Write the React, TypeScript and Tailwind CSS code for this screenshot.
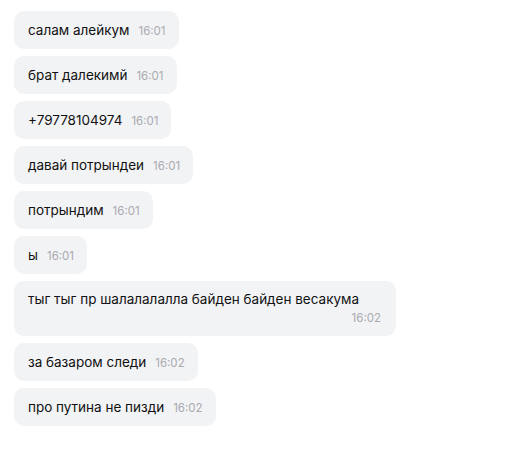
import React from "react";

const msgs: { t: string; time: string; wide?: boolean }[] = [
  { t: "салам алейкум", time: "16:01" },
  { t: "брат далекимй", time: "16:01" },
  { t: "+79778104974", time: "16:01" },
  { t: "давай потрындеи", time: "16:01" },
  { t: "потрындим", time: "16:01" },
  { t: "ы", time: "16:01" },
  { t: "тыг тыг пр шалалалалла байден байден весакума", time: "16:02", wide: true },
  { t: "за базаром следи", time: "16:02" },
  { t: "про путина не пизди", time: "16:02" },
];

export default function App() {
  return (
    <div
      className="w-[509px] h-[457px] bg-white overflow-hidden"
      style={{ fontFamily: "Inter, 'Noto Sans', sans-serif" }}
    >
      <div className="flex flex-col items-start gap-[7px] pl-[14px] pt-[11px]">
        {msgs.map((m, i) =>
          m.wide ? (
            <div
              key={i}
              className="w-[382px] h-[55px] rounded-[10px] bg-[#f2f3f5] pl-[14px] pr-[15px] pt-[9px] flex flex-col"
            >
              <span className="text-[13.5px] leading-[19px] text-[#111]">{m.t}</span>
              <span className="self-end text-[11.5px] leading-[15px] text-[#aaaab0] mt-[2px]">
                {m.time}
              </span>
            </div>
          ) : (
            <div
              key={i}
              className="h-[38px] rounded-[10px] bg-[#f2f3f5] pl-[14px] pr-[13px] flex items-center"
            >
              <span className="text-[13.5px] leading-[19px] text-[#111]">{m.t}</span>
              <span className="ml-[9px] mt-[2px] text-[11.5px] leading-[15px] text-[#aaaab0]">
                {m.time}
              </span>
            </div>
          )
        )}
      </div>
    </div>
  );
}
